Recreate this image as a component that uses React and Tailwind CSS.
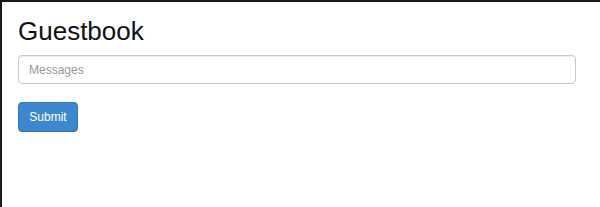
import React from 'react';

const App = () => {
  return (
    <div
      className="min-h-[207px] w-[600px] border-l-2 border-t-2 border-[#1a1a1a] bg-white pl-[16px] pr-[24px] pt-[14px]"
      style={{ fontFamily: '"Liberation Sans", Arial, sans-serif' }}
    >
      {/* Title */}
      <h1 className="text-[26px] leading-[30px] font-normal text-[#111]">Guestbook</h1>

      <form className="mt-[9px] flex flex-col items-start" onSubmit={(e) => e.preventDefault()}>
        <input
          type="text"
          placeholder="Messages"
          className="h-[29px] w-full rounded-[4px] border border-[#c8c8c8] px-[10px] text-[12px] text-[#555] shadow-[inset_0_1px_1px_rgba(0,0,0,0.075)] outline-none placeholder:text-[#999]"
        />
        <button
          type="submit"
          className="mt-[18px] h-[30px] w-[60px] rounded-[4px] border border-[#2f74b5] bg-[#3d87cd] text-[12px] text-white"
        >
          Submit
        </button>
      </form>
    </div>
  );
};

export default App;
